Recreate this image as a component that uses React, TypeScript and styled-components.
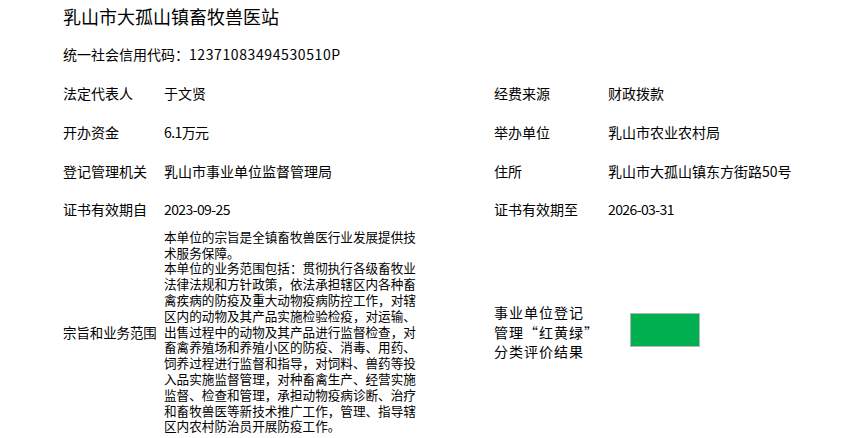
import React from "react";
import styled, { createGlobalStyle } from "styled-components";

const Global = createGlobalStyle`
  html, body { margin: 0; padding: 0; background: #fff; }
  body { font-family: "Noto Sans CJK SC", "Noto Sans", sans-serif; color: #000; }
`;

const Page = styled.div`
  width: 862px;
  height: 438px;
  overflow: hidden;
  padding-left: 63px;
  box-sizing: border-box;
`;

const Title = styled.h1`
  margin: 0;
  padding-top: 3px;
  font-size: 18px;
  font-weight: 400;
  line-height: 26px;
`;

const Code = styled.div`
  margin-top: 15px;
  font-size: 14px;
  line-height: 20px;
`;

const CodeNumber = styled.span`
  letter-spacing: 0.6px;
`;

const Table = styled.div`
  margin-top: 10px;
  display: grid;
  grid-template-columns: 101px 330px 114px auto;
  grid-template-rows: repeat(4, 38.7px) auto;
  align-items: center;
`;

const Label = styled.div<{ $size?: number }>`
  font-size: ${(p) => p.$size ?? 14}px;
  line-height: 20px;
  white-space: nowrap;
`;

const Value = styled.div<{ $digits?: boolean }>`
  font-size: 14px;
  line-height: 20px;
  white-space: nowrap;
  ${(p) => (p.$digits ? "letter-spacing: -0.6px;" : "")}
`;

const LongText = styled.div`
  width: 256px;
  font-size: 12.6px;
  line-height: 15.8px;
  padding: 0 0 2px;
  p { margin: 0; }
`;

const RatingLabel = styled.div`
  font-size: 14px;
  letter-spacing: 1px;
  line-height: 19.3px;
  white-space: nowrap;
  span { display: block; }
`;

const RatingBox = styled.div<{ $color: string }>`
  width: 68px;
  height: 32px;
  background: ${(p) => p.$color};
  border: 1px solid #b5b5b5;
  margin-left: 22px;
  margin-top: -4px;
`;

const rows: [string, string, boolean, string, string, boolean][] = [
  ["法定代表人", "于文贤", false, "经费来源", "财政拨款", false],
  ["开办资金", "6.1万元", true, "举办单位", "乳山市农业农村局", false],
  ["登记管理机关", "乳山市事业单位监督管理局", false, "住所", "乳山市大孤山镇东方街路50号", false],
  ["证书有效期自", "2023-09-25", true, "证书有效期至", "2026-03-31", true],
];

export default function App() {
  return (
    <Page>
      <Global />
      <Title>乳山市大孤山镇畜牧兽医站</Title>
      <Code>
        统一社会信用代码：<CodeNumber>12371083494530510P</CodeNumber>
      </Code>
      <Table>
        {rows.map(([l1, v1, d1, l2, v2, d2]) => (
          <React.Fragment key={l1}>
            <Label>{l1}</Label>
            <Value $digits={d1}>{v1}</Value>
            <Label>{l2}</Label>
            <Value $digits={d2}>{v2}</Value>
          </React.Fragment>
        ))}
        <Label $size={13.4}>宗旨和业务范围</Label>
        <LongText>
          <p>本单位的宗旨是全镇畜牧兽医行业发展提供技术服务保障。</p>
          <p>
            本单位的业务范围包括：贯彻执行各级畜牧业法律法规和方针政策，依法承担辖区内各种畜禽疾病的防疫及重大动物疫病防控工作，对辖区内的动物及其产品实施检验检疫，对运输、出售过程中的动物及其产品进行监督检查，对畜禽养殖场和养殖小区的防疫、消毒、用药、饲养过程进行监督和指导，对饲料、兽药等投入品实施监督管理，对种畜禽生产、经营实施监督、检查和管理，承担动物疫病诊断、治疗和畜牧兽医等新技术推广工作，管理、指导辖区内农村防治员开展防疫工作。
          </p>
        </LongText>
        <RatingLabel>
          <span>事业单位登记</span>
          <span>管理“红黄绿”</span>
          <span>分类评价结果</span>
        </RatingLabel>
        <RatingBox $color="#00b050" />
      </Table>
    </Page>
  );
}
